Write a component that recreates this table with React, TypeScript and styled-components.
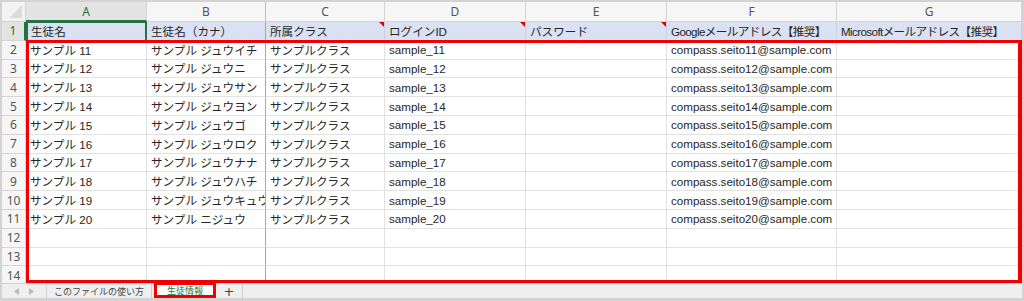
import React from "react";
import styled, { createGlobalStyle, css } from "styled-components";

const GlobalStyle = createGlobalStyle`
  html, body { margin: 0; padding: 0; background: #ffffff; }
  body { font-family: "Liberation Sans", "Noto Sans CJK JP", sans-serif; }
`;

const GREEN = "#217346";
const GRID = "#e2e2e2";
const HEAD_LINE = "#d4d4d4";
const FREEZE = "#a8a8a8";

const Frame = styled.div`
  width: 1024px;
  height: 301px;
  box-sizing: border-box;
  border: 2px solid #d3d3d3;
  border-bottom-width: 3px;
  display: flex;
  flex-direction: column;
  overflow: hidden;
  background: #fff;
`;

const Sheet = styled.div`
  position: relative;
  height: 281px;
  overflow: hidden;
  flex: none;
`;

const Grid = styled.div`
  display: grid;
  grid-template-columns: 24px 121px 119px 119px 141px 141px 170px 1fr;
  grid-template-rows: 20px repeat(14, 18.8px);
`;

const Corner = styled.div`
  background: #f3f3f3;
  border-right: 1px solid ${HEAD_LINE};
  border-bottom: 1px solid ${HEAD_LINE};
  box-sizing: border-box;
  position: relative;
  &::after {
    content: "";
    position: absolute;
    right: 3px;
    bottom: 3px;
    width: 0;
    height: 0;
    border-left: 13px solid transparent;
    border-bottom: 13px solid #dcdcdc;
  }
`;

const ColHead = styled.div<{ $active?: boolean; $freeze?: boolean }>`
  box-sizing: border-box;
  background: #f6f6f6;
  border-right: 1px solid ${(p) => (p.$freeze ? "#bdbdbd" : HEAD_LINE)};
  border-bottom: 1px solid ${HEAD_LINE};
  display: flex;
  align-items: center;
  justify-content: center;
  font-family: "Noto Sans", sans-serif;
  font-size: 12px;
  color: #555;
  ${(p) =>
    p.$active &&
    css`
      color: ${GREEN};
      background: #e3e3e3;
      border-bottom: 2px solid ${GREEN};
    `}
`;

const RowHead = styled.div<{ $active?: boolean }>`
  box-sizing: border-box;
  background: #f6f6f6;
  border-right: 1px solid ${HEAD_LINE};
  border-bottom: 1px solid ${HEAD_LINE};
  display: flex;
  align-items: center;
  justify-content: center;
  font-family: "Noto Sans", sans-serif;
  font-size: 12px;
  color: #555;
  ${(p) =>
    p.$active &&
    css`
      color: ${GREEN};
      background: #e3e3e3;
      border-right: 2px solid ${GREEN};
    `}
`;

const Cell = styled.div<{
  $head?: boolean;
  $freeze?: boolean;
  $selected?: boolean;
  $comment?: boolean;
  $tight?: boolean;
}>`
  box-sizing: border-box;
  position: relative;
  background: ${(p) => (p.$head ? "#d9e1f2" : "#fff")};
  border-right: 1px solid ${(p) => (p.$freeze ? FREEZE : p.$head ? "#c9d1e2" : GRID)};
  border-bottom: 1px solid ${(p) => (p.$head ? "#c9d1e2" : GRID)};
  font-family: "Liberation Sans", "Noto Sans CJK JP", sans-serif;
  font-size: 11.6px;
  letter-spacing: ${(p) => (p.$tight ? "-0.6px" : "0")};
  color: #262626;
  padding-left: 4px;
  white-space: nowrap;
  overflow: hidden;
  display: flex;
  align-items: center;
  ${(p) =>
    p.$selected &&
    css`
      border: 1px solid ${GREEN};
      border-left: 2px solid ${GREEN};
      border-right: 2px solid ${GREEN};
      padding-left: 3px;
    `}
  ${(p) =>
    p.$comment &&
    css`
      &::after {
        content: "";
        position: absolute;
        top: 0;
        right: 0;
        width: 0;
        height: 0;
        border-left: 5px solid transparent;
        border-top: 5px solid #e00000;
      }
    `}
`;

const Highlight = styled.div`
  position: absolute;
  left: 24px;
  top: 38px;
  right: 0;
  bottom: 0;
  border: 3px solid #f00000;
  border-right-width: 4px;
  pointer-events: none;
`;

const TabBar = styled.div`
  flex: none;
  height: 15px;
  box-sizing: border-box;
  background: #efefef;
  border-top: 1px solid #d0d0d0;
  display: flex;
  align-items: stretch;
  font-family: "Noto Sans CJK JP", sans-serif;
  font-size: 9px;
  color: #444;
`;

const Nav = styled.div`
  width: 44px;
  display: flex;
  align-items: center;
  justify-content: center;
  gap: 10px;
  border-right: 1px solid #cfcfcf;
`;

const Tab = styled.div<{ $active?: boolean; $w: number }>`
  width: ${(p) => p.$w}px;
  box-sizing: border-box;
  display: flex;
  align-items: center;
  justify-content: center;
  border-right: 1px solid #cfcfcf;
  line-height: 1;
  ${(p) =>
    p.$active &&
    css`
      background: #fff;
      color: ${GREEN};
      border: 3px solid #f00000;
      border-top-width: 2px;
      margin-left: 2px;
      margin-top: -1px;
      height: 15px;
    `}
`;

const Plus = styled.div`
  width: 26px;
  display: flex;
  align-items: center;
  justify-content: center;
  border-right: 1px solid #cfcfcf;
  font-size: 13px;
  color: #444;
  font-family: "DejaVu Sans", sans-serif;
`;

const Arrow = ({ dir }: { dir: "l" | "r" }) => (
  <svg width="5" height="7" viewBox="0 0 5 7">
    <path d={dir === "l" ? "M5 0 L0 3.5 L5 7 Z" : "M0 0 L5 3.5 L0 7 Z"} fill="#b9b9b9" />
  </svg>
);

const cols = ["A", "B", "C", "D", "E", "F", "G"];
const headers = [
  "生徒名",
  "生徒名（カナ）",
  "所属クラス",
  "ログインID",
  "パスワード",
  "Googleメールアドレス【推奨】",
  "Microsoftメールアドレス【推奨】",
];
const kana = [
  "ジュウイチ",
  "ジュウニ",
  "ジュウサン",
  "ジュウヨン",
  "ジュウゴ",
  "ジュウロク",
  "ジュウナナ",
  "ジュウハチ",
  "ジュウキュウ",
  "ニジュウ",
];

const rows: string[][] = kana.map((k, i) => {
  const n = 11 + i;
  return [
    `サンプル ${n}`,
    `サンプル ${k}`,
    "サンプルクラス",
    `sample_${n}`,
    "",
    `compass.seito${n}@sample.com`,
    "",
  ];
});
while (rows.length < 13) rows.push(["", "", "", "", "", "", ""]);

export default function App() {
  return (
    <>
      <GlobalStyle />
      <Frame>
        <Sheet>
          <Grid>
            <Corner />
            {cols.map((c, i) => (
              <ColHead key={c} $active={i === 0} $freeze={i === 1}>
                {c}
              </ColHead>
            ))}
            <RowHead $active>1</RowHead>
            {headers.map((h, i) => (
              <Cell
                key={h}
                $head
                $selected={i === 0}
                $freeze={i === 1}
                $comment={i >= 2 && i <= 4}
                $tight={i >= 5}
              >
                {h}
              </Cell>
            ))}
            {rows.map((r, ri) => (
              <React.Fragment key={ri}>
                <RowHead>{ri + 2}</RowHead>
                {r.map((v, ci) => (
                  <Cell key={ci} $freeze={ci === 1}>
                    {v}
                  </Cell>
                ))}
              </React.Fragment>
            ))}
          </Grid>
          <Highlight />
        </Sheet>
        <TabBar>
          <Nav>
            <Arrow dir="l" />
            <Arrow dir="r" />
          </Nav>
          <Tab $w={105}>このファイルの使い方</Tab>
          <Tab $w={62} $active>
            生徒情報
          </Tab>
          <Plus>+</Plus>
        </TabBar>
      </Frame>
    </>
  );
}
